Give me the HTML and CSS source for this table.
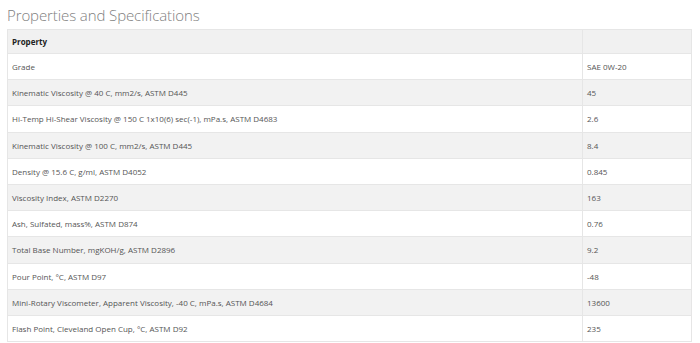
FILE: index.html
```html
<!DOCTYPE html>
<html>
<head>
<meta charset="utf-8">
<link rel="stylesheet" href="styles.css">
</head>
<body>
<h2 class="title">Properties and Specifications</h2>
<table class="specs">
  <thead>
    <tr><th class="prop">Property</th><th class="val"></th></tr>
  </thead>
  <tbody>
    <tr><td>Grade</td><td>SAE 0W-20</td></tr>
    <tr><td>Kinematic Viscosity @ 40 C, mm2/s, ASTM D445</td><td>45</td></tr>
    <tr><td>Hi-Temp Hi-Shear Viscosity @ 150 C 1x10(6) sec(-1), mPa.s, ASTM D4683</td><td>2.6</td></tr>
    <tr><td>Kinematic Viscosity @ 100 C, mm2/s, ASTM D445</td><td>8.4</td></tr>
    <tr><td>Density @ 15.6 C, g/ml, ASTM D4052</td><td>0.845</td></tr>
    <tr><td>Viscosity Index, ASTM D2270</td><td>163</td></tr>
    <tr><td>Ash, Sulfated, mass%, ASTM D874</td><td>0.76</td></tr>
    <tr><td>Total Base Number, mgKOH/g, ASTM D2896</td><td>9.2</td></tr>
    <tr><td>Pour Point, °C, ASTM D97</td><td>-48</td></tr>
    <tr><td>Mini-Rotary Viscometer, Apparent Viscosity, -40 C, mPa.s, ASTM D4684</td><td>13600</td></tr>
    <tr><td>Flash Point, Cleveland Open Cup, °C, ASTM D92</td><td>235</td></tr>
  </tbody>
</table>
</body>
</html>
```
FILE: styles.css
```css
html, body {
  margin: 0;
  padding: 0;
  background: #ffffff;
}
body {
  padding: 0 8px 0 7px;
  font-family: "Open Sans", "Liberation Sans", sans-serif;
}
.title {
  margin: 0;
  padding-top: 5px;
  height: 24px;
  font-size: 15px;
  font-weight: 300;
  color: #808080;
  line-height: 20px;
  letter-spacing: -0.1px;
}
.specs {
  width: 685px;
  border-collapse: collapse;
  border: 1px solid #e6e6e6;
  font-size: 8px;
  color: #555555;
}
.specs th, .specs td {
  text-align: left;
  padding: 0 4px;
  border-bottom: 1px solid #e6e6e6;
  vertical-align: middle;
}
.specs th {
  height: 23px;
  background: #f1f1f1;
  color: #222222;
  font-weight: 700;
}
.specs td {
  height: 25.2px;
}
.specs th.val, .specs td:last-child {
  width: 100px;
  border-left: 1px solid #e6e6e6;
}
.specs tbody tr:nth-child(even) td {
  background: #f2f2f2;
}
```
